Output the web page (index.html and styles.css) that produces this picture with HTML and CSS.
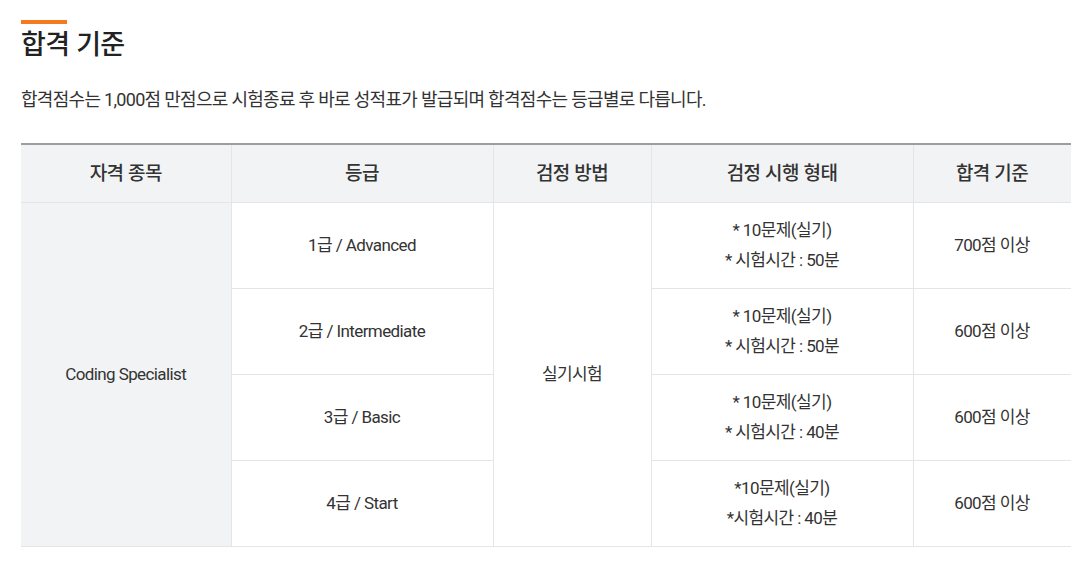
FILE: index.html
```html
<!DOCTYPE html>
<html lang="ko">
<head>
<meta charset="utf-8">
<link rel="stylesheet" href="styles.css">
</head>
<body>
<section class="section">
  <h2 class="title">합격 기준</h2>
  <p class="desc">합격점수는 1,000점 만점으로 시험종료 후 바로 성적표가 발급되며 합격점수는 등급별로 다릅니다.</p>
  <table class="grid">
    <colgroup>
      <col class="c1"><col class="c2"><col class="c3"><col class="c4"><col class="c5">
    </colgroup>
    <thead>
      <tr><th>자격 종목</th><th>등급</th><th>검정 방법</th><th>검정 시행 형태</th><th>합격 기준</th></tr>
    </thead>
    <tbody>
      <tr>
        <td rowspan="4" class="shade">Coding Specialist</td>
        <td>1급 / Advanced</td>
        <td rowspan="4">실기시험</td>
        <td>* 10문제(실기)<br>* 시험시간 : 50분</td>
        <td>700점 이상</td>
      </tr>
      <tr>
        <td>2급 / Intermediate</td>
        <td>* 10문제(실기)<br>* 시험시간 : 50분</td>
        <td>600점 이상</td>
      </tr>
      <tr>
        <td>3급 / Basic</td>
        <td>* 10문제(실기)<br>* 시험시간 : 40분</td>
        <td>600점 이상</td>
      </tr>
      <tr>
        <td>4급 / Start</td>
        <td>*10문제(실기)<br>*시험시간 : 40분</td>
        <td>600점 이상</td>
      </tr>
    </tbody>
  </table>
</section>
</body>
</html>
```

FILE: styles.css
```css
html, body {
  margin: 0;
  padding: 0;
  background: #fff;
}
body {
  font-family: Roboto, "Noto Sans CJK KR", sans-serif;
  color: #333;
  overflow: hidden;
}
.section {
  padding: 20px 0 0 21px;
  width: 1050px;
}
.title {
  margin: 0;
  padding-top: 5px;
  position: relative;
  font-family: "Noto Sans CJK KR", sans-serif;
  font-size: 27px;
  font-weight: 500;
  line-height: 36px;
  letter-spacing: -0.7px;
  color: #222;
}
.title::before {
  content: "";
  position: absolute;
  left: 0;
  top: 0;
  width: 46px;
  height: 4px;
  background: #f47a20;
}
.desc {
  margin: 27px 0 0;
  font-size: 18px;
  line-height: 24px;
  letter-spacing: -0.7px;
  color: #333;
}
.grid {
  margin-top: 31px;
  width: 1050px;
  border-collapse: collapse;
  table-layout: fixed;
  border-top: 2px solid #9b9da4;
}
.c1 { width: 210px; }
.c2 { width: 262px; }
.c3 { width: 158px; }
.c4 { width: 262px; }
.c5 { width: 158px; }
.grid th,
.grid td {
  border: 1px solid #e3e5e9;
  text-align: center;
  vertical-align: middle;
}
.grid tr > :first-child { border-left: 0; }
.grid th {
  height: 58px;
  padding: 0 0 4px;
  box-sizing: border-box;
  background: #f2f3f5;
  font-family: "Noto Sans CJK KR", sans-serif;
  font-size: 19px;
  font-weight: 500;
  letter-spacing: -0.6px;
  color: #333;
  border-top: 0;
}
.grid td {
  height: 85px;
  padding: 0;
  font-size: 17px;
  line-height: 30px;
  letter-spacing: -0.6px;
  color: #333;
}
.grid td.shade {
  background: #f2f3f5;
}
```
